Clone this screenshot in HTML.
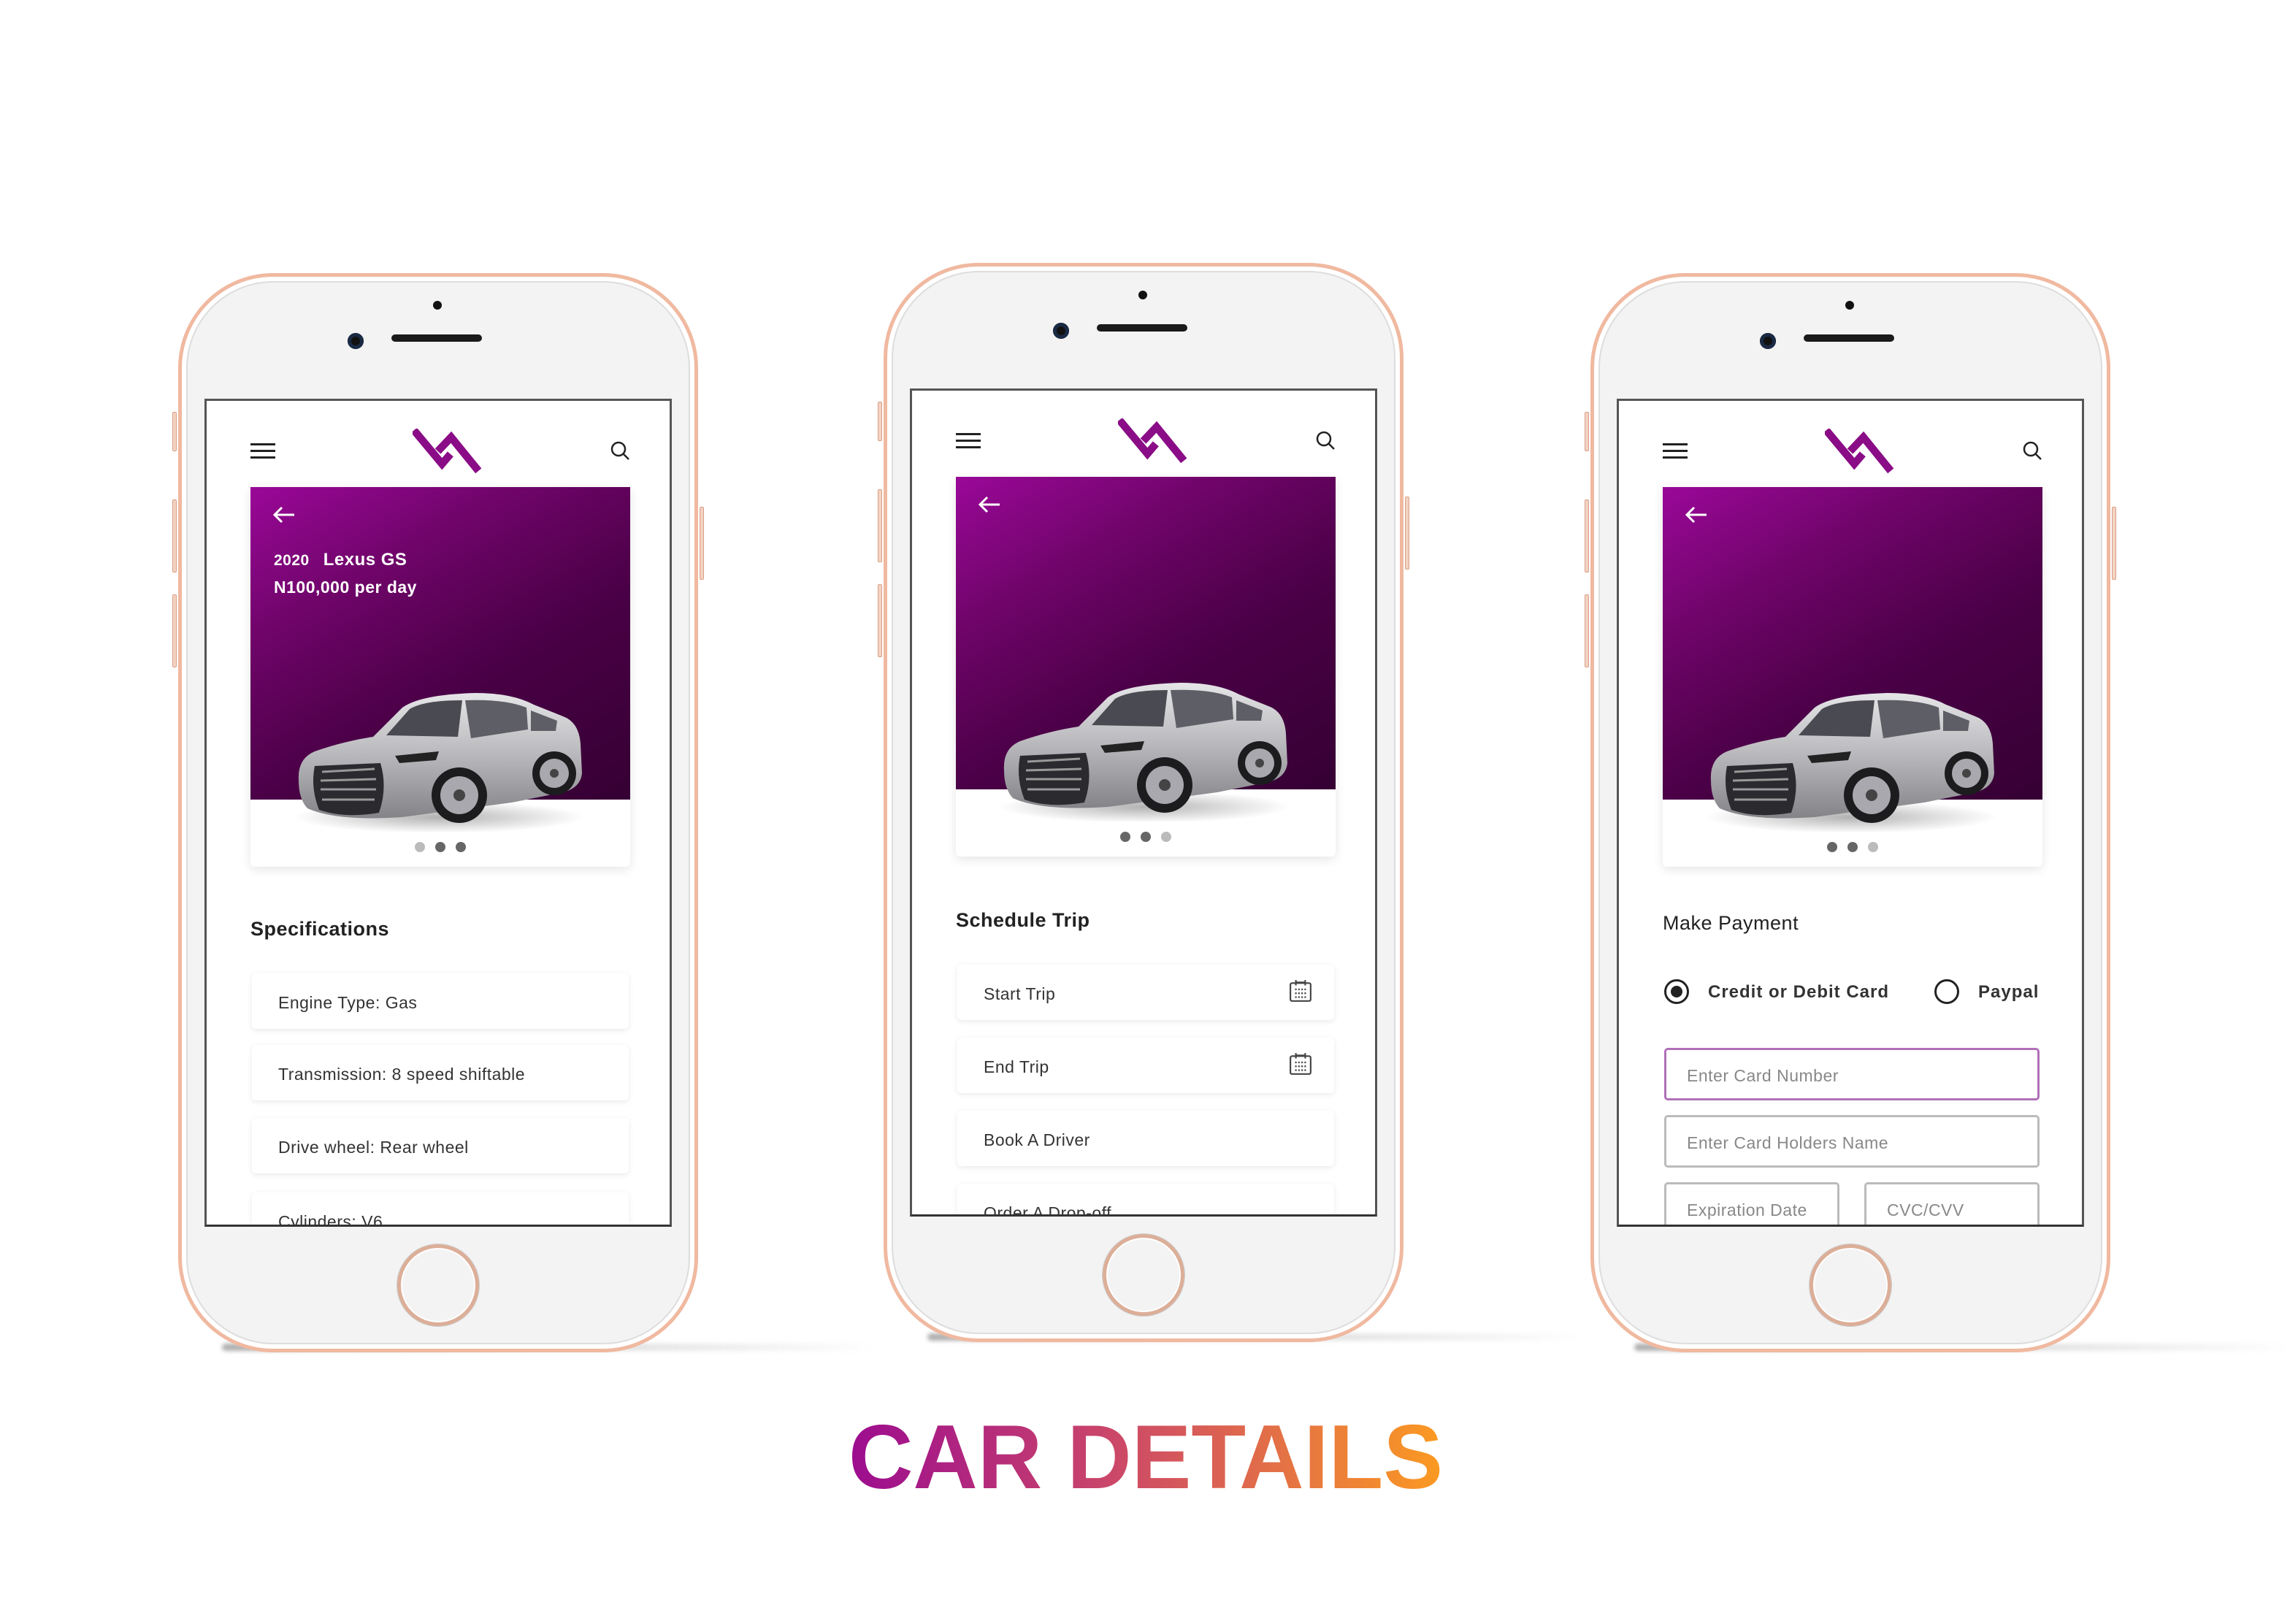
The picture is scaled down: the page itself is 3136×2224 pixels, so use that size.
<!DOCTYPE html>
<html><head><meta charset="utf-8"><style>
*{box-sizing:border-box;margin:0;padding:0}
body{width:3136px;height:2224px;background:#fff;position:relative;overflow:hidden;font-family:"Liberation Sans",sans-serif;color:#2a2a2a}
.ph{position:absolute;width:712px;height:1478px}
.shadow{position:absolute;left:60px;top:1466px;width:900px;height:10px;border-radius:5px;background:linear-gradient(90deg,rgba(120,120,120,.6),rgba(150,150,150,.35) 50%,rgba(200,200,200,0));filter:blur(3px)}
.body{position:absolute;inset:0;border-radius:130px;border:5px solid #f0b9a0;background:#f3f3f3;box-shadow:inset 0 0 0 6px #fff,inset 0 0 0 8px #ddd}
.btn{position:absolute;left:-8px;width:6px;background:#f4d2c2;border:1px solid #d9a088;border-radius:2px}
.btnr{left:auto;right:-8px}
.cam{position:absolute;left:232px;top:82px;width:22px;height:22px;border-radius:50%;background:#111;box-shadow:inset 0 0 0 5px #1a2a44}
.spk{position:absolute;left:292px;top:84px;width:124px;height:10px;border-radius:5px;background:#1a1a1a}
.dot{position:absolute;left:349px;top:38px;width:12px;height:12px;border-radius:50%;background:#111}
.home{position:absolute;left:300px;top:1330px;width:112px;height:112px;border-radius:50%;border:5px solid #dcae98;box-shadow:inset 0 0 0 2px #fff,0 0 0 1px #ccc}
.scr{position:absolute;left:36px;top:172px;width:640px;height:1134px;background:#fff;border:3px solid #555;border-bottom-color:#333;overflow:hidden}
.ham{position:absolute;left:60px;top:58px;width:34px}
.ham i{display:block;height:3px;background:#222;margin-bottom:6px}
.logo{position:absolute;left:282px;top:38px}
.srch{position:absolute;left:552px;top:54px}
.hero{position:absolute;left:60px;top:118px;width:520px;height:520px;background:#fff;box-shadow:0 4px 14px rgba(0,0,0,.1);border-radius:0 0 6px 6px}
.purp{position:absolute;left:0;top:0;width:520px;height:428px;background:linear-gradient(150deg,#9a0898 0%,#6e0468 30%,#4a0046 60%,#350033 100%)}
.arrow{position:absolute;left:30px;top:26px}
.car{position:absolute;left:58px;top:262px}
.dots{position:absolute;left:0;width:520px;top:486px;text-align:center;font-size:0}
.dots i{display:inline-block;width:14px;height:14px;border-radius:50%;background:#666;margin:0 7px}
.dots i.l{background:#bbb}
.h{position:absolute;left:60px;font-size:27px;font-weight:bold;color:#222;letter-spacing:.5px}
.box{position:absolute;left:62px;width:516px;height:76px;background:#fff;border-radius:6px;box-shadow:0 2px 8px rgba(0,0,0,.09);font-size:23px;color:#333;padding:27px 0 0 36px;letter-spacing:.5px}
.cal{position:absolute;right:30px;top:20px}
.inp{position:absolute;height:72px;border:3px solid #bbb;border-radius:5px;font-size:23px;color:#888;padding:22px 0 0 28px;letter-spacing:.5px}
</style></head><body>

<svg width="0" height="0" style="position:absolute">
<defs>
<linearGradient id="cg" x1="0" y1="0" x2="0" y2="1"><stop offset="0" stop-color="#e6e6e8"/><stop offset=".5" stop-color="#b8b8bc"/><stop offset="1" stop-color="#848488"/></linearGradient>
<radialGradient id="sh" cx=".5" cy=".5" r=".5"><stop offset="0" stop-color="rgba(0,0,0,.3)"/><stop offset="1" stop-color="rgba(0,0,0,0)"/></radialGradient>
<symbol id="carS" viewBox="0 0 400 210">
<ellipse cx="200" cy="190" rx="200" ry="22" fill="url(#sh)"/>
<path d="M8 140 Q6 110 30 100 Q70 86 110 80 L150 40 Q175 22 250 20 Q300 20 330 36 L370 52 Q392 60 394 90 L396 130 Q394 150 370 156 L300 170 L150 190 Q60 196 20 178 Q8 165 8 140Z" fill="url(#cg)"/>
<path d="M128 78 L160 42 Q180 30 232 30 L226 80 Z" fill="#4a4a52"/>
<path d="M236 30 Q290 28 320 40 L322 70 L244 82 Z" fill="#5e5e66"/>
<path d="M326 44 L362 58 L360 72 L326 72Z" fill="#5e5e66"/>
<path d="M30 120 L120 116 Q130 150 118 184 Q70 192 36 180 Q24 150 30 120Z" fill="#2b2b2f"/>
<path d="M40 128 L112 124 M38 140 L114 138 M38 152 L114 152 M40 166 L112 166" stroke="#999" stroke-width="3"/>
<circle cx="228" cy="160" r="38" fill="#1c1c1e"/><circle cx="228" cy="160" r="26" fill="#a8a8ae"/><circle cx="228" cy="160" r="8" fill="#444"/>
<circle cx="358" cy="130" r="30" fill="#1c1c1e"/><circle cx="358" cy="130" r="20" fill="#a8a8ae"/><circle cx="358" cy="130" r="6" fill="#444"/>
<path d="M140 106 L200 100 L196 112 L146 116Z" fill="#222"/>
</symbol>
<symbol id="logoS" viewBox="0 0 100 64">
<path d="M2 2 L42 50 L54 36" fill="none" stroke="#8a0c86" stroke-width="11" stroke-linejoin="miter"/>
<path d="M36 32 L55 12 L94 60" fill="none" stroke="#8a0c86" stroke-width="11" stroke-linejoin="miter"/>
</symbol>
<symbol id="calS" viewBox="0 0 30 30">
<rect x="2" y="5" width="26" height="23" rx="2" fill="none" stroke="#444" stroke-width="2"/>
<path d="M9 1v7M21 1v7M9 4h12" stroke="#444" stroke-width="2"/>
<g fill="#555"><circle cx="9" cy="13" r="1.2"/><circle cx="13" cy="13" r="1.2"/><circle cx="17" cy="13" r="1.2"/><circle cx="21" cy="13" r="1.2"/><circle cx="9" cy="18" r="1.2"/><circle cx="13" cy="18" r="1.2"/><circle cx="17" cy="18" r="1.2"/><circle cx="21" cy="18" r="1.2"/><circle cx="9" cy="23" r="1.2"/><circle cx="13" cy="23" r="1.2"/><circle cx="17" cy="23" r="1.2"/><circle cx="21" cy="23" r="1.2"/></g>
</symbol>
</defs></svg>

<!-- PHONE 1 -->
<div class="ph" style="left:244px;top:374px">
<div class="shadow"></div>
<div class="btn" style="top:190px;height:54px"></div><div class="btn" style="top:310px;height:100px"></div><div class="btn" style="top:440px;height:100px"></div><div class="btn btnr" style="top:320px;height:100px"></div>
<div class="body"></div>
<div class="dot"></div><div class="cam"></div><div class="spk"></div>
<div class="home"></div>
<div class="scr">
<div class="ham"><i></i><i></i><i></i></div>
<svg class="logo" width="96" height="62"><use href="#logoS"/></svg>
<svg class="srch" width="30" height="30" viewBox="0 0 30 30"><circle cx="12" cy="12" r="9" fill="none" stroke="#222" stroke-width="2.5"/><path d="M19 19l7 7" stroke="#222" stroke-width="2.5"/></svg>
<div class="hero"><div class="purp"></div>
<svg class="arrow" width="32" height="24" viewBox="0 0 32 24"><path d="M30 12H3M13 2L3 12l10 10" fill="none" stroke="#fff" stroke-width="3"/></svg>
<div style="position:absolute;left:32px;top:86px;color:#fff;font-size:21px;font-weight:bold;letter-spacing:.5px">2020&nbsp;&nbsp; <span style="font-size:24px">Lexus GS</span></div>
<div style="position:absolute;left:32px;top:124px;color:#fff;font-size:23px;font-weight:bold;letter-spacing:.5px">N100,000 per day</div>
<svg class="car" width="400" height="210"><use href="#carS"/></svg>
<div class="dots"><i class="l"></i><i></i><i></i></div>
</div>
<div class="h" style="top:708px">Specifications</div>
<div class="box" style="top:784px">Engine Type: Gas</div>
<div class="box" style="top:882px">Transmission: 8 speed shiftable</div>
<div class="box" style="top:982px">Drive wheel: Rear wheel</div>
<div class="box" style="top:1084px">Cylinders: V6</div>
</div>
</div>

<!-- PHONE 2 -->
<div class="ph" style="left:1210px;top:360px">
<div class="shadow"></div>
<div class="btn" style="top:190px;height:54px"></div><div class="btn" style="top:310px;height:100px"></div><div class="btn" style="top:440px;height:100px"></div><div class="btn btnr" style="top:320px;height:100px"></div>
<div class="body"></div>
<div class="dot"></div><div class="cam"></div><div class="spk"></div>
<div class="home"></div>
<div class="scr">
<div class="ham"><i></i><i></i><i></i></div>
<svg class="logo" width="96" height="62"><use href="#logoS"/></svg>
<svg class="srch" width="30" height="30" viewBox="0 0 30 30"><circle cx="12" cy="12" r="9" fill="none" stroke="#222" stroke-width="2.5"/><path d="M19 19l7 7" stroke="#222" stroke-width="2.5"/></svg>
<div class="hero"><div class="purp"></div>
<svg class="arrow" width="32" height="24" viewBox="0 0 32 24"><path d="M30 12H3M13 2L3 12l10 10" fill="none" stroke="#fff" stroke-width="3"/></svg>
<svg class="car" width="400" height="210"><use href="#carS"/></svg>
<div class="dots"><i></i><i></i><i class="l"></i></div>
</div>
<div class="h" style="top:710px">Schedule Trip</div>
<div class="box" style="top:786px">Start Trip<svg class="cal" width="32" height="32"><use href="#calS"/></svg></div>
<div class="box" style="top:886px">End Trip<svg class="cal" width="32" height="32"><use href="#calS"/></svg></div>
<div class="box" style="top:986px">Book A Driver</div>
<div class="box" style="top:1086px">Order A Drop-off</div>
</div>
</div>

<!-- PHONE 3 -->
<div class="ph" style="left:2178px;top:374px">
<div class="shadow"></div>
<div class="btn" style="top:190px;height:54px"></div><div class="btn" style="top:310px;height:100px"></div><div class="btn" style="top:440px;height:100px"></div><div class="btn btnr" style="top:320px;height:100px"></div>
<div class="body"></div>
<div class="dot"></div><div class="cam"></div><div class="spk"></div>
<div class="home"></div>
<div class="scr">
<div class="ham"><i></i><i></i><i></i></div>
<svg class="logo" width="96" height="62"><use href="#logoS"/></svg>
<svg class="srch" width="30" height="30" viewBox="0 0 30 30"><circle cx="12" cy="12" r="9" fill="none" stroke="#222" stroke-width="2.5"/><path d="M19 19l7 7" stroke="#222" stroke-width="2.5"/></svg>
<div class="hero"><div class="purp"></div>
<svg class="arrow" width="32" height="24" viewBox="0 0 32 24"><path d="M30 12H3M13 2L3 12l10 10" fill="none" stroke="#fff" stroke-width="3"/></svg>
<svg class="car" width="400" height="210"><use href="#carS"/></svg>
<div class="dots"><i></i><i></i><i class="l"></i></div>
</div>
<div class="h" style="top:700px;font-weight:normal;color:#222;font-size:27px">Make Payment</div>
<div style="position:absolute;left:62px;top:792px;width:34px;height:34px;border-radius:50%;border:3px solid #222"><div style="position:absolute;left:6px;top:6px;width:16px;height:16px;border-radius:50%;background:#222"></div></div>
<div style="position:absolute;left:122px;top:796px;font-size:24px;font-weight:bold;color:#333;letter-spacing:1px">Credit or Debit Card</div>
<div style="position:absolute;left:432px;top:792px;width:34px;height:34px;border-radius:50%;border:3px solid #222"></div>
<div style="position:absolute;left:492px;top:796px;font-size:24px;font-weight:bold;color:#333;letter-spacing:1px">Paypal</div>
<div class="inp" style="left:62px;top:886px;width:514px;border-color:#b070b8">Enter Card Number</div>
<div class="inp" style="left:62px;top:978px;width:514px">Enter Card Holders Name</div>
<div class="inp" style="left:62px;top:1070px;width:240px">Expiration Date</div>
<div class="inp" style="left:336px;top:1070px;width:240px">CVC/CVV</div>
</div>
</div>

<svg style="position:absolute;left:1140px;top:1916px" width="860" height="140">
<defs><linearGradient id="tg" x1="0" x2="1"><stop offset="0" stop-color="#9c0c90"/><stop offset=".45" stop-color="#cc4868"/><stop offset="1" stop-color="#fb9a22"/></linearGradient></defs>
<text x="22" y="122" font-family="Liberation Sans, sans-serif" font-weight="bold" font-size="124" fill="url(#tg)" textLength="814" lengthAdjust="spacingAndGlyphs">CAR DETAILS</text>
</svg>
</body></html>
